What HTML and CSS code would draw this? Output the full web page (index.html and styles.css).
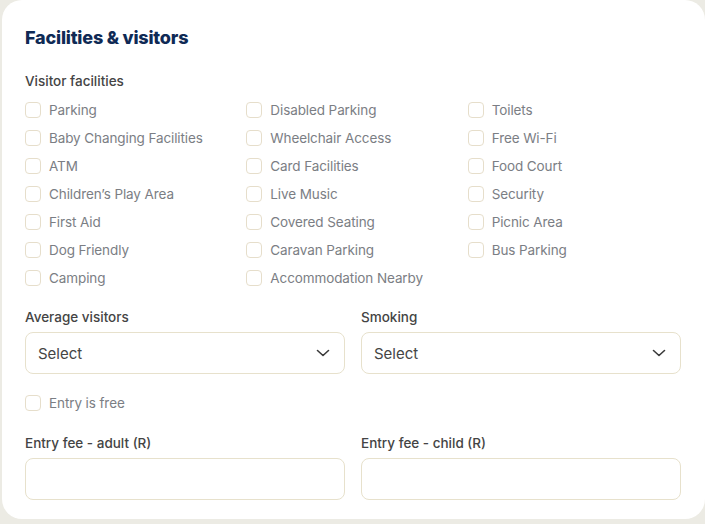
FILE: index.html
```html
<!DOCTYPE html>
<html>
<head>
<meta charset="utf-8">
<link rel="stylesheet" href="styles.css">
</head>
<body>
<div class="card">
  <h2 class="title">Facilities &amp; visitors</h2>
  <div class="label">Visitor facilities</div>
  <div class="grid">
    <label class="check"><span class="box"></span>Parking</label>
    <label class="check"><span class="box"></span>Disabled Parking</label>
    <label class="check"><span class="box"></span>Toilets</label>
    <label class="check"><span class="box"></span>Baby Changing Facilities</label>
    <label class="check"><span class="box"></span>Wheelchair Access</label>
    <label class="check"><span class="box"></span>Free Wi-Fi</label>
    <label class="check"><span class="box"></span>ATM</label>
    <label class="check"><span class="box"></span>Card Facilities</label>
    <label class="check"><span class="box"></span>Food Court</label>
    <label class="check"><span class="box"></span>Children’s Play Area</label>
    <label class="check"><span class="box"></span>Live Music</label>
    <label class="check"><span class="box"></span>Security</label>
    <label class="check"><span class="box"></span>First Aid</label>
    <label class="check"><span class="box"></span>Covered Seating</label>
    <label class="check"><span class="box"></span>Picnic Area</label>
    <label class="check"><span class="box"></span>Dog Friendly</label>
    <label class="check"><span class="box"></span>Caravan Parking</label>
    <label class="check"><span class="box"></span>Bus Parking</label>
    <label class="check"><span class="box"></span>Camping</label>
    <label class="check"><span class="box"></span>Accommodation Nearby</label>
  </div>
  <div class="two sec1">
    <div class="field">
      <div class="label">Average visitors</div>
      <div class="select"><span>Select</span>
        <svg width="14" height="8" viewBox="0 0 14 8"><polyline points="1.5,1.5 7,6.5 12.5,1.5" fill="none" stroke="#3a3a3a" stroke-width="1.6" stroke-linecap="round" stroke-linejoin="round"/></svg>
      </div>
    </div>
    <div class="field">
      <div class="label">Smoking</div>
      <div class="select"><span>Select</span>
        <svg width="14" height="8" viewBox="0 0 14 8"><polyline points="1.5,1.5 7,6.5 12.5,1.5" fill="none" stroke="#3a3a3a" stroke-width="1.6" stroke-linecap="round" stroke-linejoin="round"/></svg>
      </div>
    </div>
  </div>
  <label class="check free"><span class="box"></span>Entry is free</label>
  <div class="two sec2">
    <div class="field">
      <div class="label">Entry fee - adult (R)</div>
      <div class="input"></div>
    </div>
    <div class="field">
      <div class="label">Entry fee - child (R)</div>
      <div class="input"></div>
    </div>
  </div>
</div>
</body>
</html>
```
FILE: styles.css
```css
html, body {
  margin: 0;
  padding: 0;
  background: #ecebe4;
}
body {
  width: 705px;
  height: 524px;
  overflow: hidden;
  font-family: Inter, "Noto Sans", sans-serif;
}
.card {
  margin-left: 2px;
  width: 703px;
  box-sizing: border-box;
  background: #ffffff;
  border-radius: 20px;
  padding: 25px 24px 19px 23px;
}
.title {
  margin: 0;
  font-size: 18px;
  line-height: 26px;
  font-weight: 800;
  color: #0f2a55;
  letter-spacing: -0.2px;
}
.label {
  font-size: 13.5px;
  line-height: 18px;
  font-weight: 500;
  color: #444444;
}
.title + .label {
  margin-top: 21px;
}
.grid {
  margin-top: 6px;
  display: grid;
  grid-template-columns: repeat(3, 1fr);
  column-gap: 8px;
}
.check {
  display: flex;
  align-items: center;
  height: 28px;
  font-size: 13.5px;
  letter-spacing: -0.1px;
  color: #7b7e84;
}
.box {
  width: 16px;
  height: 16px;
  border: 1px solid #e6decb;
  border-radius: 4px;
  margin-right: 8px;
  flex: none;
  box-sizing: border-box;
}
.two {
  display: grid;
  grid-template-columns: 1fr 1fr;
  column-gap: 16px;
}
.sec1 { margin-top: 16px; }
.sec2 { margin-top: 17px; }
.free { margin-top: 15px; }
.field .label {
  margin-bottom: 6px;
}
.sec2 .field .label { margin-bottom: 6px; }
.select, .input {
  height: 42px;
  box-sizing: border-box;
  border: 1px solid #e7e1cc;
  border-radius: 8px;
  background: #fff;
}
.select {
  display: flex;
  align-items: center;
  justify-content: space-between;
  padding: 0 14px 0 12px;
  font-size: 15px;
  color: #454545;
}
.select svg { display: block; }
```
